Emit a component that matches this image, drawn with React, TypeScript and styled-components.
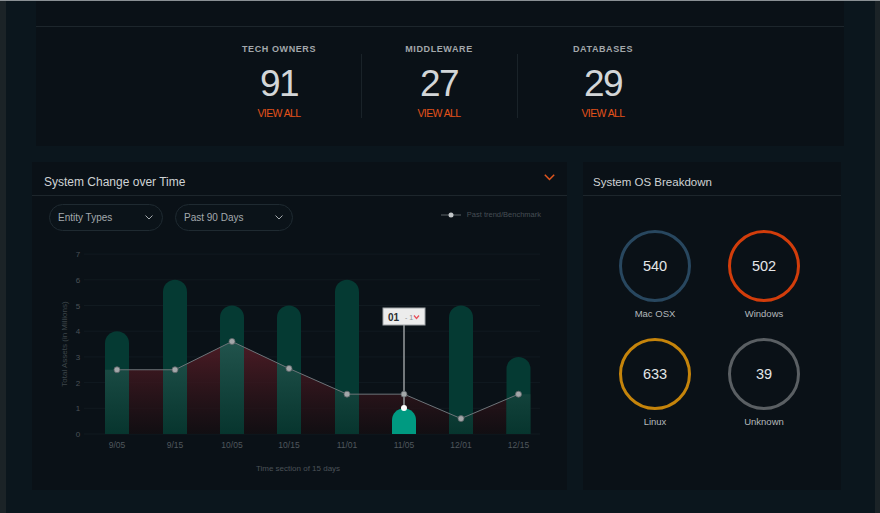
import styled, { createGlobalStyle } from "styled-components";

const GlobalStyle = createGlobalStyle`
  html, body {
    margin: 0;
    padding: 0;
    background: #0b161d;
  }
  body {
    font-family: "Liberation Sans", Arial, sans-serif;
  }
`;

const stats = [
  { label: "TECH OWNERS", value: "91", width: 164 },
  { label: "MIDDLEWARE", value: "27", width: 156 },
  { label: "DATABASES", value: "29", width: 172 },
];

const osItems = [
  { value: 540, label: "Mac OSX", color: "#28475f" },
  { value: 502, label: "Windows", color: "#d23d0b" },
  { value: 633, label: "Linux", color: "#c5840b" },
  { value: 39, label: "Unknown", color: "#5a5f63" },
];

// chart data (page coordinates are used as the svg viewBox)
const centers = [117, 175, 232, 289, 347, 404, 461, 518.5];
const labels = ["9/05", "9/15", "10/05", "10/15", "11/01", "11/05", "12/01", "12/15"];
const bars = [4, 6, 5, 5, 6, 1, 5, 3];
const trend = [2.5, 2.5, 3.6, 2.55, 1.55, 1.55, 0.6, 1.55];
const selected = 5;
const BASE = 435;
const UNIT = 25.7;
const BAR_W = 24;
const yOf = (v: number) => BASE - v * UNIT;

const barPath = (c: number, v: number) => {
  const x = c - BAR_W / 2;
  const top = yOf(v);
  const r = BAR_W / 2;
  return `M${x},${BASE} V${top + r} A${r} ${r} 0 0 1 ${x + BAR_W},${top + r} V${BASE} Z`;
};

const linePoints = centers.map((c, i) => `${c},${yOf(trend[i])}`).join(" ");
const areaPoints = [
  `${centers[0] - BAR_W / 2},${yOf(trend[0])}`,
  linePoints,
  `${centers[7] + BAR_W / 2},${yOf(trend[7])}`,
  `${centers[7] + BAR_W / 2},${BASE}`,
  `${centers[0] - BAR_W / 2},${BASE}`,
].join(" ");

const Page = styled.div`
  width: 880px;
  height: 513px;
  display: flex;
  border-top: 1px solid #8a9094;
  box-sizing: border-box;
  overflow: hidden;
  background: #0b161d;
`;

const EdgeStrip = styled.div<{ $w: number }>`
  width: ${(p) => p.$w}px;
  flex-shrink: 0;
  background: #1b2327;
`;

const Main = styled.main`
  flex: 1;
  display: flex;
  flex-direction: column;
`;

const TopPanel = styled.section`
  margin-left: 30px;
  width: 808px;
  height: 145px;
  background: #0a1117;
  display: flex;
  flex-direction: column;
`;

const TopHeader = styled.div`
  height: 25px;
  border-bottom: 1px solid #1d262c;
`;

const StatsRow = styled.div`
  display: flex;
  justify-content: center;
  padding-left: 6px;
`;

const StatCol = styled.div<{ $w: number; $sep: boolean }>`
  width: ${(p) => p.$w}px;
  display: flex;
  flex-direction: column;
  align-items: center;
  padding-top: 17px;
  background: ${(p) =>
    p.$sep ? "linear-gradient(#1a2329, #1a2329) no-repeat 0 27px / 1px 64px" : "none"};
`;

const StatLabel = styled.div`
  font-size: 9px;
  line-height: 11px;
  font-weight: 700;
  letter-spacing: 0.6px;
  color: #a3a8ab;
`;

const StatValue = styled.div`
  margin-top: 11px;
  font-size: 37px;
  line-height: 36px;
  letter-spacing: -1.5px;
  color: #d3d6d8;
`;

const ViewAll = styled.a`
  margin-top: 5px;
  font-size: 10.5px;
  line-height: 12px;
  letter-spacing: -0.6px;
  color: #e2521a;
  text-decoration: none;
  cursor: pointer;
`;

const BottomRow = styled.div`
  margin-top: 16px;
  padding-left: 26px;
  display: grid;
  grid-template-columns: 535px 258px;
  gap: 16px;
  height: 328px;
`;

const Card = styled.section`
  background: #0a1117;
  display: flex;
  flex-direction: column;
`;

const CardHeader = styled.div<{ $pl: number }>`
  height: 34px;
  border-bottom: 1px solid #1d262c;
  display: flex;
  align-items: flex-end;
  justify-content: space-between;
  padding: 0 12px 6px ${(p) => p.$pl}px;
  box-sizing: border-box;
  flex-shrink: 0;
`;

const CardTitle = styled.h2<{ $size: number }>`
  margin: 0;
  font-size: ${(p) => p.$size}px;
  line-height: 14px;
  font-weight: 400;
  color: #cfd3d5;
`;

const Collapse = styled.svg`
  align-self: flex-start;
  margin-top: 12px;
`;

const Controls = styled.div`
  display: flex;
  align-items: flex-start;
  gap: 12px;
  margin-top: 8px;
  padding: 0 26px 0 17px;
`;

const Select = styled.button<{ $w: number }>`
  width: ${(p) => p.$w}px;
  height: 27px;
  border-radius: 14px;
  border: 1px solid #1f2a31;
  background: #0b1319;
  display: flex;
  align-items: center;
  justify-content: space-between;
  padding: 0 9px 0 8px;
  font-family: "Liberation Sans", Arial, sans-serif;
  font-size: 10px;
  color: #a3a9ad;
  cursor: pointer;
`;

const Legend = styled.div`
  margin-left: auto;
  margin-top: 6px;
  display: flex;
  align-items: center;
  gap: 6px;
  font-size: 7.5px;
  color: #464e54;
`;

const ChartSvg = styled.svg`
  display: block;
  margin-top: 4px;
`;

const OsGrid = styled.div`
  display: grid;
  grid-template-columns: 109px 109px;
  justify-content: center;
  row-gap: 18px;
  padding: 34px 5px 0 0;
`;

const OsItem = styled.div`
  display: flex;
  flex-direction: column;
  align-items: center;
  gap: 6px;
`;

const Ring = styled.div<{ $color: string }>`
  width: 72px;
  height: 72px;
  box-sizing: border-box;
  border-radius: 50%;
  border: 3.5px solid ${(p) => p.$color};
  display: flex;
  align-items: center;
  justify-content: center;
  font-size: 14.5px;
  color: #e4e6e7;
`;

const OsLabel = styled.div`
  font-size: 9.5px;
  line-height: 12px;
  color: #b3b8bb;
`;

const Chevron = ({ color, w = 8 }: { color: string; w?: number }) => (
  <svg width={w} height={w / 2 + 1} viewBox="0 0 8 5" fill="none">
    <polyline points="0.5,0.5 4,4 7.5,0.5" stroke={color} strokeWidth="1" />
  </svg>
);

const Chart = () => (
  <ChartSvg width={535} height={254} viewBox="32 236 535 254">
    <defs>
      <linearGradient id="areaRed" x1="0" y1="340" x2="0" y2="435" gradientUnits="userSpaceOnUse">
        <stop offset="0" stopColor="#5a1e28" stopOpacity="0.85" />
        <stop offset="1" stopColor="#140d10" stopOpacity="0.7" />
      </linearGradient>
      <linearGradient id="areaTeal" x1="0" y1="340" x2="0" y2="435" gradientUnits="userSpaceOnUse">
        <stop offset="0" stopColor="#22544d" />
        <stop offset="1" stopColor="#07352e" />
      </linearGradient>
      <clipPath id="barClip">
        {centers.map((c, i) =>
          i === selected ? null : <path key={i} d={barPath(c, bars[i])} />
        )}
      </clipPath>
    </defs>

    {[0, 1, 2, 3, 4, 5, 6, 7].map((v) => (
      <g key={v}>
        <line x1={84} x2={540} y1={yOf(v)} y2={yOf(v)} stroke="#111a20" strokeWidth="1" />
        <text x={78} y={yOf(v) + 3} fontSize="8" fill="#4a5257" textAnchor="middle">
          {v}
        </text>
      </g>
    ))}

    <polygon points={areaPoints} fill="url(#areaRed)" />

    {centers.map((c, i) => (
      <path key={i} d={barPath(c, bars[i])} fill={i === selected ? "#009a81" : "#053a33"} />
    ))}

    <polygon points={areaPoints} fill="url(#areaTeal)" clipPath="url(#barClip)" />

    <polyline points={linePoints} fill="none" stroke="#6d7479" strokeWidth="1" />

    <line x1={404} x2={404} y1={326} y2={409} stroke="#8e9396" strokeWidth="1.6" />

    {centers.map((c, i) => (
      <circle key={i} cx={c} cy={yOf(trend[i])} r={3} fill="#a3a7a9" stroke="#5d6367" strokeWidth="0.8" />
    ))}
    <circle cx={404} cy={409} r={3} fill="#ffffff" />

    <rect x={383} y={309} width={42} height={17} fill="#ececec" stroke="#a0a5a8" strokeWidth="1" />
    <text x={388} y={321.5} fontSize="10" fontWeight="700" fill="#2a2d30">
      01
    </text>
    <text x={405} y={320.5} fontSize="7" fill="#8a8e91">
      - 1
    </text>
    <polyline points="414,316.5 416.5,319.5 419,316.5" fill="none" stroke="#e8505b" strokeWidth="1.3" />

    {centers.map((c, i) => (
      <text key={i} x={c} y={449} fontSize="8.5" fill="#4f575d" textAnchor="middle">
        {labels[i]}
      </text>
    ))}

    <text
      x={0}
      y={0}
      fontSize="8"
      fill="#3d454a"
      textAnchor="middle"
      transform="translate(67 345) rotate(-90)"
    >
      Total Assets (in Millions)
    </text>
    <text x={298} y={472} fontSize="8" fill="#4a5257" textAnchor="middle">
      Time section of 15 days
    </text>
  </ChartSvg>
);

export default function App() {
  return (
    <>
      <GlobalStyle />
      <Page>
        <EdgeStrip $w={6} />
        <Main>
          <TopPanel>
            <TopHeader />
            <StatsRow>
              {stats.map((s, i) => (
                <StatCol key={s.label} $w={s.width} $sep={i > 0}>
                  <StatLabel>{s.label}</StatLabel>
                  <StatValue>{s.value}</StatValue>
                  <ViewAll>VIEW ALL</ViewAll>
                </StatCol>
              ))}
            </StatsRow>
          </TopPanel>

          <BottomRow>
            <Card>
              <CardHeader $pl={12}>
                <CardTitle $size={12}>System Change over Time</CardTitle>
                <Collapse width="11" height="7" viewBox="0 0 11 7" fill="none">
                  <polyline points="0.8,0.8 5.5,5.5 10.2,0.8" stroke="#e2561e" strokeWidth="1.5" />
                </Collapse>
              </CardHeader>
              <Controls>
                <Select $w={114}>
                  Entity Types
                  <Chevron color="#a3a9ad" />
                </Select>
                <Select $w={118}>
                  Past 90 Days
                  <Chevron color="#a3a9ad" />
                </Select>
                <Legend>
                  <svg width="20" height="6" viewBox="0 0 20 6">
                    <line x1="0" x2="20" y1="3" y2="3" stroke="#5c6469" strokeWidth="1" />
                    <circle cx="10" cy="3" r="2.5" fill="#c2c6c8" />
                  </svg>
                  Past trend/Benchmark
                </Legend>
              </Controls>
              <Chart />
            </Card>

            <Card>
              <CardHeader $pl={10}>
                <CardTitle $size={11.5}>System OS Breakdown</CardTitle>
              </CardHeader>
              <OsGrid>
                {osItems.map((o) => (
                  <OsItem key={o.label}>
                    <Ring $color={o.color}>{o.value}</Ring>
                    <OsLabel>{o.label}</OsLabel>
                  </OsItem>
                ))}
              </OsGrid>
            </Card>
          </BottomRow>
        </Main>
        <EdgeStrip $w={5} />
      </Page>
    </>
  );
}
